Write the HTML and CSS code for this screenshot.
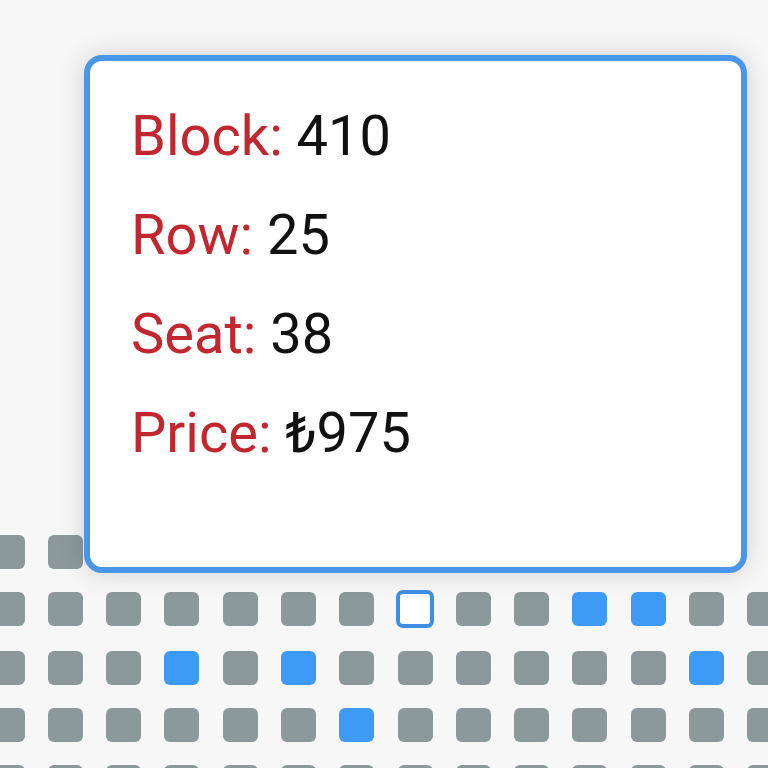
FILE: index.html
```html
<!DOCTYPE html>
<html lang="en">
<head>
<meta charset="utf-8">
<title>Seat tooltip</title>
<link rel="stylesheet" href="styles.css">
</head>
<body>
<div class="stage">
  <div class="seatmap">
    <!-- row 1 -->
    <span class="seat"></span><span class="seat"></span><span class="seat"></span><span class="seat"></span><span class="seat"></span><span class="seat"></span><span class="seat"></span><span class="seat"></span><span class="seat"></span><span class="seat"></span><span class="seat"></span><span class="seat"></span><span class="seat"></span><span class="seat empty"></span>
    <!-- row 2 -->
    <span class="seat"></span><span class="seat"></span><span class="seat"></span><span class="seat"></span><span class="seat"></span><span class="seat"></span><span class="seat"></span><span class="seat current"></span><span class="seat"></span><span class="seat"></span><span class="seat taken"></span><span class="seat taken"></span><span class="seat"></span><span class="seat"></span>
    <!-- row 3 -->
    <span class="seat"></span><span class="seat"></span><span class="seat"></span><span class="seat taken"></span><span class="seat"></span><span class="seat taken"></span><span class="seat"></span><span class="seat"></span><span class="seat"></span><span class="seat"></span><span class="seat"></span><span class="seat"></span><span class="seat taken"></span><span class="seat"></span>
    <!-- row 4 -->
    <span class="seat"></span><span class="seat"></span><span class="seat"></span><span class="seat"></span><span class="seat"></span><span class="seat"></span><span class="seat taken"></span><span class="seat"></span><span class="seat"></span><span class="seat"></span><span class="seat"></span><span class="seat"></span><span class="seat"></span><span class="seat"></span>
    <!-- row 5 -->
    <span class="seat"></span><span class="seat"></span><span class="seat"></span><span class="seat"></span><span class="seat"></span><span class="seat"></span><span class="seat"></span><span class="seat"></span><span class="seat"></span><span class="seat"></span><span class="seat"></span><span class="seat"></span><span class="seat"></span><span class="seat"></span>
  </div>

  <div class="tooltip">
    <div class="line"><span class="label">Block:</span> <span class="value">410</span></div>
    <div class="line"><span class="label">Row:</span> <span class="value">25</span></div>
    <div class="line"><span class="label">Seat:</span> <span class="value">38</span></div>
    <div class="line"><span class="label">Price:</span> <span class="value">₺975</span></div>
  </div>
</div>
</body>
</html>
```

FILE: styles.css
```css
html, body {
  margin: 0;
  padding: 0;
  background: #f7f7f7;
}

.stage {
  position: relative;
  width: 768px;
  height: 768px;
  overflow: hidden;
  font-family: Roboto, "Liberation Sans", sans-serif;
}

.seatmap {
  display: grid;
  grid-template-columns: repeat(14, 35px);
  column-gap: 23.3px;
  row-gap: 23px;
  padding-top: 535px;
  margin-left: -10.5px;
}

.seat {
  display: block;
  width: 35px;
  height: 34px;
  border-radius: 6px;
  background: #8c999b;
  box-sizing: border-box;
}

.seat.taken {
  background: #3d9bf6;
}

.seat.current {
  background: #ffffff;
  border: 4px solid #3f8fe6;
  width: 38px;
  height: 38px;
  margin: -2px 0 0 -2px;
  border-radius: 7px;
}

.seat.empty {
  visibility: hidden;
}

.tooltip {
  position: absolute;
  left: 84px;
  top: 55px;
  width: 663px;
  height: 518px;
  box-sizing: border-box;
  background: #ffffff;
  border: 6px solid #4a97ea;
  border-radius: 18px;
  box-shadow: 0 0 26px rgba(0, 0, 0, 0.16);
  padding: 26px 0 0 41px;
}

.line {
  height: 99px;
  line-height: 99px;
  font-size: 56px;
  white-space: nowrap;
}

.label {
  color: #c2262e;
}

.value {
  color: #111111;
}
```
